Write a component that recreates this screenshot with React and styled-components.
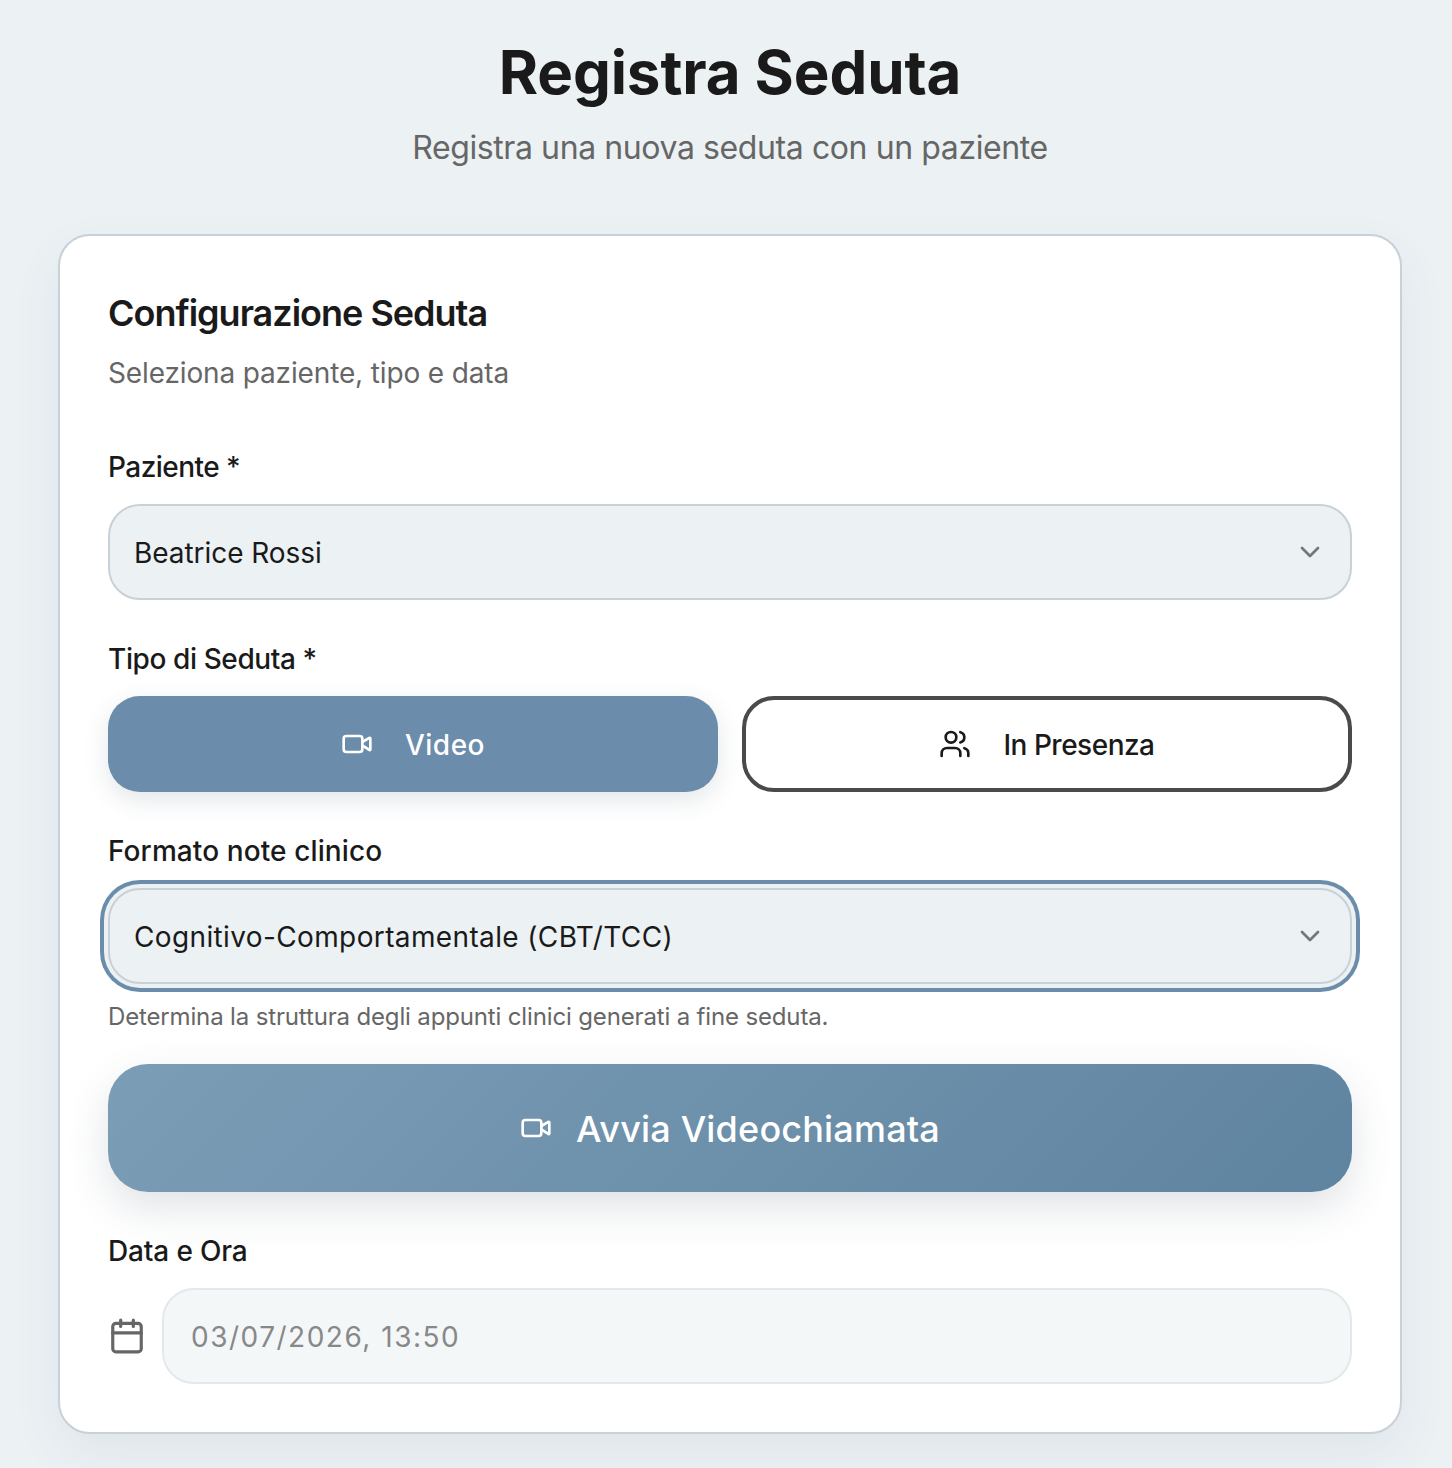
import React from 'react'
import styled, { createGlobalStyle } from 'styled-components'
import { Video, Users, Calendar, ChevronDown } from 'lucide-react'

const GlobalStyle = createGlobalStyle`
  html, body { margin: 0; padding: 0; background: #ecf1f4; }
  * { box-sizing: border-box; }
  body { font-family: Inter, "Open Sans", sans-serif; color: #1a1a1a; }
`

const Page = styled.div`
  width: 1452px;
  height: 1468px;
  padding: 32px 50px 34px 58px;
  background: #ecf1f4;
`

const PageTitle = styled.h1`
  margin: 0 0 16px;
  font-size: 60px;
  line-height: 80px;
  font-weight: 700;
  letter-spacing: -0.1px;
  text-align: center;
  color: #1a1a1a;
`

const PageSubtitle = styled.p`
  margin: 0 0 66px;
  font-size: 32px;
  line-height: 40px;
  font-weight: 400;
  letter-spacing: -0.4px;
  text-align: center;
  color: #666666;
`

const Card = styled.section`
  height: 1200px;
  padding: 48px;
  background: #ffffff;
  border: 2px solid #c8d0d8;
  border-radius: 32px;
  box-shadow: 0 20px 50px rgba(60, 80, 100, 0.07);
`

const CardTitle = styled.h2`
  margin: 0 0 15px;
  padding-top: 1px;
  font-size: 36px;
  line-height: 56px;
  font-weight: 600;
  letter-spacing: -1px;
  color: #1a1a1a;
`

const CardSubtitle = styled.p`
  margin: 0 0 58px;
  font-size: 28px;
  line-height: 34px;
  letter-spacing: -0.14px;
  color: #666666;
`

const Field = styled.div`
  margin-bottom: ${(p) => p.$gap ?? 40}px;
`

const Label = styled.label`
  display: block;
  margin-bottom: 18px;
  font-size: 28px;
  line-height: 38px;
  font-weight: 500;
  letter-spacing: ${(p) => p.$track ?? -0.45}px;
  color: #1a1a1a;
`

const SelectWrap = styled.div`
  position: relative;
  color: #777777;

  svg {
    position: absolute;
    top: 32px;
    right: 26px;
    pointer-events: none;
  }
`

const Select = styled.select`
  display: block;
  width: 100%;
  height: 96px;
  padding: 2px 24px 0;
  appearance: none;
  font-family: inherit;
  font-size: 28px;
  letter-spacing: ${(p) => p.$track ?? 0}px;
  color: #1a1a1a;
  background: #ecf1f4;
  border: 2px solid #c8d0d8;
  border-radius: 32px;
  outline: none;
  box-shadow: ${(p) => (p.$focused ? '0 0 0 4px #ecf1f4, 0 0 0 8px #6b8cab' : 'none')};
`

const TypeRow = styled.div`
  display: grid;
  grid-template-columns: 1fr 1fr;
  gap: 24px;
`

const TypeButton = styled.button`
  display: flex;
  align-items: center;
  justify-content: center;
  gap: 32px;
  height: 96px;
  font-family: inherit;
  font-size: 28px;
  font-weight: 500;
  border-radius: 32px;
  color: ${(p) => (p.$active ? '#ffffff' : '#1a1a1a')};
  background: ${(p) => (p.$active ? '#6b8cab' : '#ffffff')};
  border: ${(p) => (p.$active ? '0' : '4px solid #4a4a4a')};
  box-shadow: ${(p) => (p.$active ? '0 8px 24px rgba(60, 80, 100, 0.14)' : 'none')};
`

const ButtonText = styled.span`
  padding-top: 2px;
  letter-spacing: ${(p) => p.$track ?? 0}px;
`

const Hint = styled.p`
  margin: 16px 0 0;
  font-size: 24px;
  line-height: 34px;
  letter-spacing: -0.15px;
  color: #666666;
`

const StartButton = styled.button`
  display: flex;
  align-items: center;
  justify-content: center;
  gap: 24px;
  width: 100%;
  height: 128px;
  margin-bottom: 40px;
  font-family: inherit;
  font-size: 36px;
  font-weight: 500;
  color: #ffffff;
  background: linear-gradient(135deg, #7c9db6 0%, #5f84a0 100%);
  border: 0;
  border-radius: 40px;
  box-shadow: 0 16px 40px rgba(60, 80, 100, 0.16);
`

const DateRow = styled.div`
  display: flex;
  align-items: center;
  gap: 16px;
  color: #666666;
`

const DateInput = styled.input`
  flex: 1;
  height: 96px;
  padding: 2px 27px 0;
  font-family: inherit;
  font-size: 28px;
  letter-spacing: 1.5px;
  color: #888888;
  background: #f4f7f8;
  border: 2px solid #e3e8ec;
  border-radius: 32px;
  outline: none;
`

export default function App() {
  return (
    <Page>
      <GlobalStyle />
      <PageTitle>Registra Seduta</PageTitle>
      <PageSubtitle>Registra una nuova seduta con un paziente</PageSubtitle>

      <Card>
        <CardTitle>Configurazione Seduta</CardTitle>
        <CardSubtitle>Seleziona paziente, tipo e data</CardSubtitle>

        <Field>
          <Label $track={-0.55}>Paziente *</Label>
          <SelectWrap>
            <Select $track={-0.05} defaultValue="beatrice">
              <option value="beatrice">Beatrice Rossi</option>
            </Select>
            <ChevronDown size={32} strokeWidth={2} />
          </SelectWrap>
        </Field>

        <Field>
          <Label $track={-0.4}>Tipo di Seduta *</Label>
          <TypeRow>
            <TypeButton $active>
              <Video size={32} strokeWidth={2} />
              <ButtonText $track={0.5}>Video</ButtonText>
            </TypeButton>
            <TypeButton>
              <Users size={32} strokeWidth={2} />
              <ButtonText $track={-0.5}>In Presenza</ButtonText>
            </TypeButton>
          </TypeRow>
        </Field>

        <Field $gap={30}>
          <Label $track={0.1}>Formato note clinico</Label>
          <SelectWrap>
            <Select $focused $track={0.37} defaultValue="cbt">
              <option value="cbt">Cognitivo-Comportamentale (CBT/TCC)</option>
            </Select>
            <ChevronDown size={32} strokeWidth={2} />
          </SelectWrap>
          <Hint>Determina la struttura degli appunti clinici generati a fine seduta.</Hint>
        </Field>

        <StartButton>
          <Video size={32} strokeWidth={2} />
          <ButtonText $track={0.18}>Avvia Videochiamata</ButtonText>
        </StartButton>

        <Field $gap={0}>
          <Label $track={-0.15}>Data e Ora</Label>
          <DateRow>
            <Calendar size={38} strokeWidth={2} />
            <DateInput readOnly value="03/07/2026, 13:50" />
          </DateRow>
        </Field>
      </Card>
    </Page>
  )
}
